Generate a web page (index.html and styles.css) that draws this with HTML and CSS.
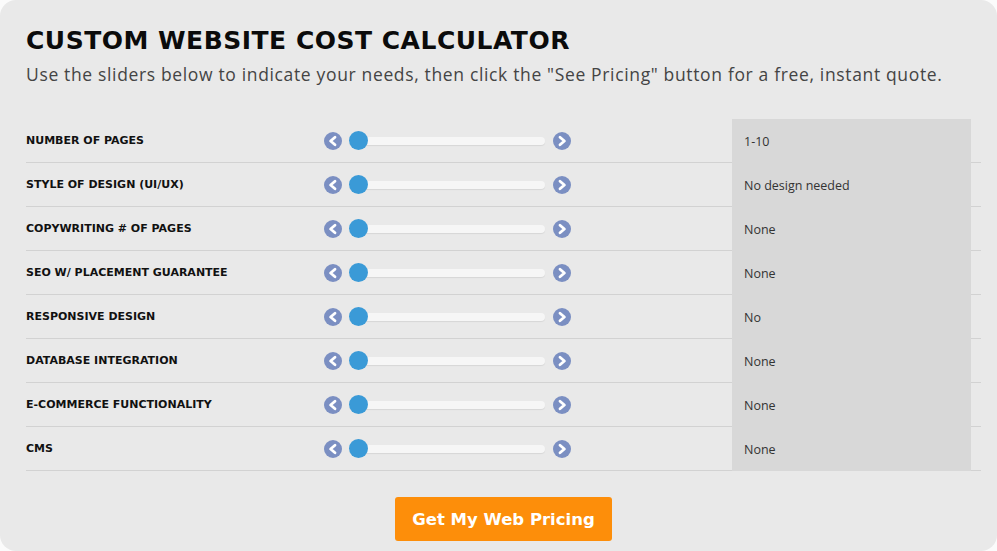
FILE: index.html
```html
<!DOCTYPE html>
<html lang="en">
<head>
<meta charset="utf-8">
<title>Custom Website Cost Calculator</title>
<link rel="stylesheet" href="styles.css">
</head>
<body>
<main class="calc">
  <h1 class="calc-title">CUSTOM WEBSITE COST CALCULATOR</h1>
  <p class="calc-intro">Use the sliders below to indicate your needs, then click the "See Pricing" button for a free, instant quote.</p>

  <div class="calc-table">
    <div class="row">
      <div class="label">NUMBER OF PAGES</div>
      <div class="slider">
        <svg class="arrow" viewBox="0 0 18 18"><circle cx="9" cy="9" r="9"/><path d="M11 5.2 L6.6 9 L11 12.8"/></svg>
        <div class="track"><span class="knob"></span></div>
        <svg class="arrow" viewBox="0 0 18 18"><circle cx="9" cy="9" r="9"/><path d="M7 5.2 L11.4 9 L7 12.8"/></svg>
      </div>
      <div class="gap"></div>
      <div class="value">1-10</div>
      <div class="tail"></div>
    </div>
    <div class="row">
      <div class="label">STYLE OF DESIGN (UI/UX)</div>
      <div class="slider">
        <svg class="arrow" viewBox="0 0 18 18"><circle cx="9" cy="9" r="9"/><path d="M11 5.2 L6.6 9 L11 12.8"/></svg>
        <div class="track"><span class="knob"></span></div>
        <svg class="arrow" viewBox="0 0 18 18"><circle cx="9" cy="9" r="9"/><path d="M7 5.2 L11.4 9 L7 12.8"/></svg>
      </div>
      <div class="gap"></div>
      <div class="value">No design needed</div>
      <div class="tail"></div>
    </div>
    <div class="row">
      <div class="label">COPYWRITING # OF PAGES</div>
      <div class="slider">
        <svg class="arrow" viewBox="0 0 18 18"><circle cx="9" cy="9" r="9"/><path d="M11 5.2 L6.6 9 L11 12.8"/></svg>
        <div class="track"><span class="knob"></span></div>
        <svg class="arrow" viewBox="0 0 18 18"><circle cx="9" cy="9" r="9"/><path d="M7 5.2 L11.4 9 L7 12.8"/></svg>
      </div>
      <div class="gap"></div>
      <div class="value">None</div>
      <div class="tail"></div>
    </div>
    <div class="row">
      <div class="label">SEO W/ PLACEMENT GUARANTEE</div>
      <div class="slider">
        <svg class="arrow" viewBox="0 0 18 18"><circle cx="9" cy="9" r="9"/><path d="M11 5.2 L6.6 9 L11 12.8"/></svg>
        <div class="track"><span class="knob"></span></div>
        <svg class="arrow" viewBox="0 0 18 18"><circle cx="9" cy="9" r="9"/><path d="M7 5.2 L11.4 9 L7 12.8"/></svg>
      </div>
      <div class="gap"></div>
      <div class="value">None</div>
      <div class="tail"></div>
    </div>
    <div class="row">
      <div class="label">RESPONSIVE DESIGN</div>
      <div class="slider">
        <svg class="arrow" viewBox="0 0 18 18"><circle cx="9" cy="9" r="9"/><path d="M11 5.2 L6.6 9 L11 12.8"/></svg>
        <div class="track"><span class="knob"></span></div>
        <svg class="arrow" viewBox="0 0 18 18"><circle cx="9" cy="9" r="9"/><path d="M7 5.2 L11.4 9 L7 12.8"/></svg>
      </div>
      <div class="gap"></div>
      <div class="value">No</div>
      <div class="tail"></div>
    </div>
    <div class="row">
      <div class="label">DATABASE INTEGRATION</div>
      <div class="slider">
        <svg class="arrow" viewBox="0 0 18 18"><circle cx="9" cy="9" r="9"/><path d="M11 5.2 L6.6 9 L11 12.8"/></svg>
        <div class="track"><span class="knob"></span></div>
        <svg class="arrow" viewBox="0 0 18 18"><circle cx="9" cy="9" r="9"/><path d="M7 5.2 L11.4 9 L7 12.8"/></svg>
      </div>
      <div class="gap"></div>
      <div class="value">None</div>
      <div class="tail"></div>
    </div>
    <div class="row">
      <div class="label">E-COMMERCE FUNCTIONALITY</div>
      <div class="slider">
        <svg class="arrow" viewBox="0 0 18 18"><circle cx="9" cy="9" r="9"/><path d="M11 5.2 L6.6 9 L11 12.8"/></svg>
        <div class="track"><span class="knob"></span></div>
        <svg class="arrow" viewBox="0 0 18 18"><circle cx="9" cy="9" r="9"/><path d="M7 5.2 L11.4 9 L7 12.8"/></svg>
      </div>
      <div class="gap"></div>
      <div class="value">None</div>
      <div class="tail"></div>
    </div>
    <div class="row">
      <div class="label">CMS</div>
      <div class="slider">
        <svg class="arrow" viewBox="0 0 18 18"><circle cx="9" cy="9" r="9"/><path d="M11 5.2 L6.6 9 L11 12.8"/></svg>
        <div class="track"><span class="knob"></span></div>
        <svg class="arrow" viewBox="0 0 18 18"><circle cx="9" cy="9" r="9"/><path d="M7 5.2 L11.4 9 L7 12.8"/></svg>
      </div>
      <div class="gap"></div>
      <div class="value">None</div>
      <div class="tail"></div>
    </div>
  </div>

  <div class="actions">
    <button type="button" class="pricing-btn">Get My Web Pricing</button>
  </div>
</main>
</body>
</html>
```

FILE: styles.css
```css
html, body {
	margin: 0;
	height: 100%;
}

body {
	background: #fbfbfb;
	font-family: "DejaVu Sans", sans-serif;
	color: #111;
}

.calc {
	box-sizing: border-box;
	height: 551px;
	padding: 25px 16px 0 26px;
	background-color: #e9e9e9;
	border-radius: 16px;
}

.calc-title {
	margin: 0;
	font-size: 25px;
	line-height: 32px;
	font-weight: bold;
	letter-spacing: 0.5px;
	color: #0b0b0b;
}

.calc-intro {
	margin: 6px 0 0;
	font-family: "Open Sans", sans-serif;
	font-size: 17.5px;
	line-height: 22px;
	letter-spacing: 0.65px;
	color: #444;
}

.calc-table {
	margin-top: 34px;
}

.row {
	display: grid;
	grid-template-columns: 298px 254px 1fr 239px 10px;
	height: 44px;
}

.row > div {
	box-sizing: border-box;
	border-bottom: 1px solid #d2d2d2;
}

.row > .value {
	border-bottom: none;
	background-color: #d8d8d8;
	padding-left: 12px;
	display: flex;
	align-items: center;
	font-family: "Open Sans", sans-serif;
	font-size: 12.5px;
	color: #333;
}

.label {
	display: flex;
	align-items: center;
	font-size: 11px;
	font-weight: bold;
	color: #111;
}

.slider {
	display: flex;
	align-items: center;
	gap: 7px;
}

.arrow {
	width: 18px;
	height: 18px;
	flex: none;
}

.arrow circle {
	fill: #7b8fc2;
}

.arrow path {
	fill: none;
	stroke: #fff;
	stroke-width: 2.8;
	stroke-linecap: round;
	stroke-linejoin: round;
}

.track {
	position: relative;
	width: 196px;
	height: 8px;
	margin-right: 1px;
	background-color: #f6f6f6;
	border-radius: 4px;
	box-shadow: 0 1px 1px rgba(0, 0, 0, 0.08);
}

.knob {
	position: absolute;
	left: 0;
	top: -6px;
	width: 19px;
	height: 19px;
	border-radius: 50%;
	background-color: #3a9ad7;
}

.actions {
	display: flex;
	justify-content: center;
	margin-top: 26px;
}

.pricing-btn {
	width: 217px;
	height: 44px;
	border: none;
	border-radius: 3px;
	background-color: #fd8e0a;
	color: #fff;
	font-family: "DejaVu Sans", sans-serif;
	font-size: 16.5px;
	font-weight: bold;
}
```
